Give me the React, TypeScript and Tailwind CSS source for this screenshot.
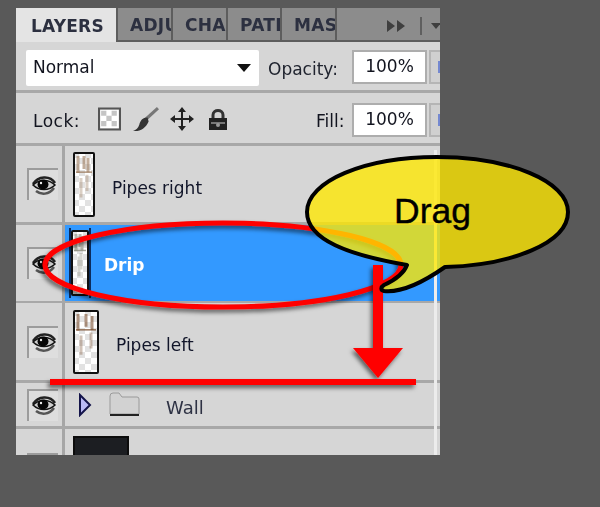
const FONT = "font-['DejaVu_Sans',sans-serif]";

function Eye() {
  return (
    <svg width="26" height="21" viewBox="0 0 26 21" aria-hidden="true">
      <path d="M2 9 C7 1 19 0 24 8" fill="none" stroke="#222" strokeWidth="2.5" />
      <path d="M2 10 C8 4 18 4 24 10 C18 16 8 16 2 10Z" fill="#cfcfcf" stroke="#111" strokeWidth="1.5" />
      <ellipse cx="12" cy="9.5" rx="5.5" ry="5" fill="#050505" />
      <circle cx="10" cy="8" r="1.2" fill="#eee" />
      <path d="M5 16 C10 20 18 20 23 13" fill="none" stroke="#555" strokeWidth="2.5" />
    </svg>
  );
}

function EyeCell() {
  return (
    <div className="flex w-[49px] shrink-0 items-center border-r-[3px] border-[#a6a6a6] pl-[11px]">
      <div className="flex h-[32px] w-[31px] items-center justify-center border-l-2 border-t-2 border-[#9c9c9c] bg-[#dedede]">
        <Eye />
      </div>
    </div>
  );
}

// small checkered layer thumbnail with a stain at the top
function Thumb({ w, h, stain }: { w: number; h: number; stain: string }) {
  return (
    <svg width={w} height={h} viewBox={`0 0 ${w} ${h}`} aria-hidden="true">
      <defs>
        <pattern id={`chk${w}`} width="12" height="12" patternUnits="userSpaceOnUse">
          <rect width="12" height="12" fill="#fff" />
          <rect width="6" height="6" fill="#e2e2e2" />
          <rect x="6" y="6" width="6" height="6" fill="#e2e2e2" />
        </pattern>
      </defs>
      <rect x="1" y="1" width={w - 2} height={h - 2} rx="1" fill={`url(#chk${w})`} stroke="#111" strokeWidth="2" />
      <path d={`M5 4v${h * 0.26}M${w / 2} 4v${h * 0.2}M${w - 7} 6v${h * 0.22}`} stroke={stain} strokeWidth="3" opacity="0.6" />
      <path d={`M3 ${h * 0.31}h${w - 6}`} stroke={stain} strokeWidth="1.5" opacity="0.8" />
      <path d={`M8 ${h * 0.4}v${h * 0.3}M${w - 8} ${h * 0.35}v${h * 0.25}`} stroke={stain} strokeWidth="3" opacity="0.35" />
    </svg>
  );
}

function Tab({ label, w }: { label: string; w: number }) {
  return (
    <div
      className="flex h-full shrink-0 items-center overflow-hidden border-r-2 border-b-2 border-[#5d5d5d] bg-[#8c8c8c] pt-[3px] pl-[12px] text-[17px] font-bold tracking-[0.3px] whitespace-nowrap text-[#2c3040]"
      style={{ width: w }}
    >
      {label}
    </div>
  );
}

function PercentField() {
  return (
    <div className="flex items-center gap-[2px]">
      <div className="flex h-[34px] w-[75px] items-center justify-center border-2 border-[#adadad] bg-white text-[17px] text-[#12141f]">
        100%
      </div>
      <div className="flex h-[34px] w-[11px] items-center border-2 border-r-0 border-[#b5b5b5] bg-[#d0d0d0] pl-[7px]">
        <div className="h-[12px] w-[4px] bg-[#7488d0]" />
      </div>
    </div>
  );
}

function Annotations() {
  return (
    <svg className="absolute inset-0" width="600" height="507" viewBox="0 0 600 507" aria-hidden="true">
      <defs>
        <filter id="sh" x="-10%" y="-20%" width="120%" height="140%">
          <feDropShadow dx="-2" dy="3" stdDeviation="2" floodColor="#000" floodOpacity="0.55" />
        </filter>
      </defs>
      <ellipse cx="223" cy="265" rx="178" ry="42" fill="none" stroke="#ff0000" strokeWidth="5" filter="url(#sh)" />
      <g filter="url(#sh)" fill="#ff0000">
        <rect x="373" y="265" width="10" height="85" />
        <path d="M353 348H403L378 378Z" />
        <rect x="50" y="379" width="366" height="6" />
      </g>
      <path
        d="M407 265 C349 255 307 240 307 212 C307 181 365 157 437 157 C509 157 568 181 568 212 C568 243 512 265 445 267 C425 281 403 293 384 291 C380 290 381 287 384 285 C395 280 404 273 407 265Z"
        fill="#ffe800"
        fillOpacity="0.78"
        stroke="#000"
        strokeWidth="4"
        strokeLinejoin="round"
      />
    </svg>
  );
}

export default function App() {
  return (
    <div className={`relative h-[507px] w-[600px] overflow-hidden bg-[#595959] pt-[8px] pl-[16px] ${FONT}`}>
      <div className="h-[447px] w-[424px] overflow-hidden bg-[#d6d6d6] blur-[0.5px]">
        {/* tabs */}
        <div className="flex h-[34px] bg-[#8c8c8c]">
          <div className="flex w-[102px] shrink-0 items-center border-r-2 border-[#5d5d5d] bg-[#e4e4e4] pt-[3px] pl-[15px] text-[17px] font-bold tracking-[0.2px] text-[#2c3040]">
            LAYERS
          </div>
          <Tab label="ADJU" w={55} />
          <Tab label="CHA" w={55} />
          <Tab label="PATI" w={54} />
          <Tab label="MAS" w={55} />
          <div className="flex flex-1 items-center overflow-hidden border-b-2 border-[#5d5d5d] pt-[4px] pl-[49px]">
            <svg className="shrink-0" width="20" height="14" viewBox="0 0 20 14" aria-hidden="true">
              <path d="M1 1L9 7L1 13ZM11 1L19 7L11 13Z" fill="#3f3f3f" />
            </svg>
            <div className="ml-[14px] h-[18px] w-[2px] shrink-0 bg-[#5f5f5f]" />
            <svg className="ml-[9px] shrink-0" width="10" height="6" viewBox="0 0 10 6" aria-hidden="true">
              <path d="M0 0H10L5 6Z" fill="#3f3f3f" />
            </svg>
          </div>
        </div>

        {/* blend mode and opacity */}
        <div className="flex h-[51px] items-start border-b-[3px] border-[#a8a8a8] pt-[8px] pl-[10px]">
          <div className="flex h-[36px] w-[233px] items-center justify-between rounded-[2px] bg-white pr-[8px] pl-[7px] text-[17px] text-[#12141f]">
            Normal
            <svg width="14" height="8" viewBox="0 0 14 8" aria-hidden="true">
              <path d="M0 0H14L7 8Z" fill="#111" />
            </svg>
          </div>
          <span className="ml-[9px] w-[84px] pt-[7px] text-[17px] whitespace-nowrap text-[#20242f]">Opacity:</span>
          <PercentField />
        </div>

        {/* lock row */}
        <div className="flex h-[53px] items-start border-b-[3px] border-[#a8a8a8] pt-[10px] pl-[17px]">
          <span className="w-[65px] pt-[6px] text-[17px] tracking-[0.5px] text-[#12141f]">Lock:</span>
          <svg className="mt-[4px]" width="23" height="24" viewBox="0 0 22 22" aria-hidden="true">
            <rect x="1" y="1" width="20" height="20" fill="#fff" stroke="#555" strokeWidth="2" />
            <path d="M3 3h5v5H3zM13 3h5v5h-5zM8 8h5v5H8zM3 13h5v5H3zM13 13h5v5h-5z" fill="#c4c4c4" />
          </svg>
          <svg className="mt-[3px] ml-[11px]" width="27" height="27" viewBox="0 0 26 26" aria-hidden="true">
            <path d="M25 2L13 13" stroke="#777" strokeWidth="3" />
            <path d="M15 11C10 11 8 14 7 18C6 21 4 23 1 24C7 25 13 22 16 15Z" fill="#333" />
          </svg>
          <svg className="mt-[4px] ml-[11px]" width="24" height="24" viewBox="0 0 24 24" aria-hidden="true">
            <path d="M12 2V22M2 12H22" stroke="#222" strokeWidth="2" />
            <path d="M12 0L16 5H8ZM12 24L8 19H16ZM0 12L5 8V16ZM24 12L19 16V8Z" fill="#222" />
          </svg>
          <svg className="mt-[5px] ml-[14px]" width="20" height="23" viewBox="0 0 20 23" aria-hidden="true">
            <path d="M5 10V7C5 1 15 1 15 7V10" fill="none" stroke="#333" strokeWidth="3" />
            <rect x="1" y="10" width="18" height="12" fill="#222" />
            <rect x="3" y="14" width="14" height="2" fill="#777" />
            <circle cx="10" cy="17" r="2" fill="#999" />
          </svg>
          <span className="ml-auto w-[36px] pt-[6px] text-[17px] text-[#12141f]">Fill:</span>
          <PercentField />
        </div>

        {/* layers */}
        <div className="flex h-[79px] border-b-[3px] border-[#a8a8a8]">
          <EyeCell />
          <div className="flex items-center pl-[8px]">
            <Thumb w={22} h={65} stain="#9b7a5c" />
            <span className="ml-[17px] pt-[9px] text-[17px] text-[#12162a]">Pipes right</span>
          </div>
        </div>
        <div className="flex h-[78px] border-b-2 border-[#a8a8a8]">
          <EyeCell />
          <div className="flex flex-1 items-center bg-[#3399ff] pl-[4px]">
            <div className="border-x-2 border-[#0c2c5c] py-[2px]">
              <Thumb w={18} h={66} stain="#8f8f80" />
            </div>
            <span className="ml-[13px] pt-[5px] text-[17px] font-bold text-white">Drip</span>
          </div>
        </div>
        <div className="flex h-[80px] border-b-[3px] border-[#a8a8a8]">
          <EyeCell />
          <div className="flex items-center pl-[8px]">
            <Thumb w={26} h={64} stain="#7d5233" />
            <span className="ml-[17px] pt-[9px] text-[17px] text-[#12162a]">Pipes left</span>
          </div>
        </div>
        <div className="flex h-[46px] border-b-[3px] border-[#a8a8a8]">
          <EyeCell />
          <div className="flex items-center pl-[13px]">
            <svg width="14" height="24" viewBox="0 0 14 24" aria-hidden="true">
              <path d="M2 2L12 12L2 22Z" fill="#b9b9f5" stroke="#14144a" strokeWidth="2" />
            </svg>
            <svg className="ml-[17px]" width="31" height="25" viewBox="0 0 31 25" aria-hidden="true">
              <path d="M1 4Q1 1 4 1H10L13 5H28Q30 5 30 7V22H1Z" fill="#d2d2d2" stroke="#9a9a9a" />
              <path d="M1 23H30" stroke="#222" strokeWidth="2" />
            </svg>
            <span className="ml-[26px] pt-[5px] text-[18px] text-[#2e3244]">Wall</span>
          </div>
        </div>
        <div className="flex h-[30px]">
          <div className="flex w-[49px] shrink-0 border-r-[3px] border-[#a6a6a6] pt-[24px] pl-[11px]">
            <div className="h-[6px] w-[31px] bg-[#9c9c9c]" />
          </div>
          <div className="pt-[7px] pl-[8px]">
            <div className="h-[23px] w-[56px] border-2 border-[#0c0c0c] bg-[#1c1e22]" />
          </div>
        </div>
      </div>
      {/* scrollbar edge */}
      <div className="absolute top-[150px] left-[434px] h-[305px] w-[3px] bg-[#ececec]" />
      <Annotations />
      <span className="absolute top-[191px] left-[394px] font-['Liberation_Sans',sans-serif] text-[35.5px] leading-[40px] text-black [-webkit-text-stroke:0.4px_#000]">
        Drag
      </span>
    </div>
  );
}
